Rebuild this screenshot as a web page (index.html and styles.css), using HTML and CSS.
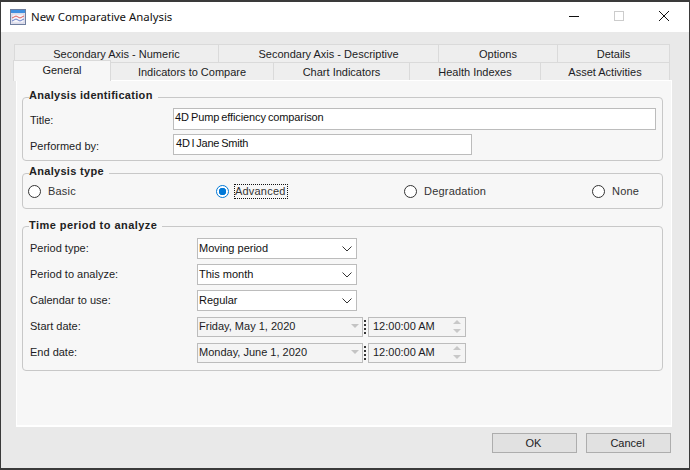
FILE: index.html
```html
<!DOCTYPE html>
<html lang="en">
<head>
<meta charset="utf-8">
<title>New Comparative Analysis</title>
<link rel="stylesheet" href="styles.css">
</head>
<body>
<div class="window">
  <header class="titlebar">
    <svg class="app-icon" width="16" height="16" viewBox="0 0 16 16">
      <rect x="0.5" y="0.5" width="15" height="15" fill="#e8e8f4" stroke="#6f7f9f"/>
      <rect x="1" y="1" width="14" height="3" fill="#3f8fe0"/>
      <rect x="2" y="5" width="12" height="9" fill="#f4f4fa" stroke="#b4b4cc" stroke-width="0.5"/>
      <path d="M2 9 L6 7 L10 9 L14 7" fill="none" stroke="#e06060"/>
      <path d="M2 12 L6 10 L10 12 L14 10" fill="none" stroke="#6a80c8"/>
    </svg>
    <span class="title">New Comparative Analysis</span>
    <div class="controls">
      <svg width="12" height="12" viewBox="0 0 12 12"><path d="M1 6.5H11" stroke="#111" fill="none"/></svg>
      <svg width="12" height="12" viewBox="0 0 12 12"><rect x="1.5" y="1.5" width="9" height="9" stroke="#ccc" fill="none"/></svg>
      <svg width="12" height="12" viewBox="0 0 12 12"><path d="M1 1L11 11M11 1L1 11" stroke="#111" fill="none"/></svg>
    </div>
  </header>
  <main class="body">
    <div class="tabs">
      <div class="tab-row back">
        <div class="tab w204">Secondary Axis - Numeric</div>
        <div class="tab w220">Secondary Axis - Descriptive</div>
        <div class="tab w119">Options</div>
        <div class="tab w112">Details</div>
      </div>
      <div class="tab-row front">
        <div class="tab active">General</div>
        <div class="tab w163">Indicators to Compare</div>
        <div class="tab w136">Chart Indicators</div>
        <div class="tab w131">Health Indexes</div>
        <div class="tab w129">Asset Activities</div>
      </div>
    </div>
    <section class="panel">
      <fieldset class="group id-group">
        <legend>Analysis identification</legend>
        <div class="form-row first">
          <label class="label-id">Title:</label>
          <div class="input wide">4D Pump efficiency comparison</div>
        </div>
        <div class="form-row">
          <label class="label-id">Performed by:</label>
          <div class="input medium">4D I Jane Smith</div>
        </div>
      </fieldset>
      <fieldset class="group type-group">
        <legend>Analysis type</legend>
        <div class="radios">
          <div class="radio"><span class="dot"></span><span>Basic</span></div>
          <div class="radio"><span class="dot on"></span><span class="focus">Advanced</span></div>
          <div class="radio"><span class="dot"></span><span>Degradation</span></div>
          <div class="radio"><span class="dot"></span><span>None</span></div>
        </div>
      </fieldset>
      <fieldset class="group time-group">
        <legend>Time period to analyze</legend>
        <div class="time-rows">
          <div class="form-row">
            <label class="label-time">Period type:</label>
            <div class="select"><span>Moving period</span><svg width="10" height="6" viewBox="0 0 10 6"><path d="M0.5 0.5L5 5L9.5 0.5" fill="none" stroke="#333"/></svg></div>
          </div>
          <div class="form-row">
            <label class="label-time">Period to analyze:</label>
            <div class="select"><span>This month</span><svg width="10" height="6" viewBox="0 0 10 6"><path d="M0.5 0.5L5 5L9.5 0.5" fill="none" stroke="#333"/></svg></div>
          </div>
          <div class="form-row">
            <label class="label-time">Calendar to use:</label>
            <div class="select"><span>Regular</span><svg width="10" height="6" viewBox="0 0 10 6"><path d="M0.5 0.5L5 5L9.5 0.5" fill="none" stroke="#333"/></svg></div>
          </div>
          <div class="form-row">
            <label class="label-time">Start date:</label>
            <div class="date"><span>Friday, May 1, 2020</span><i class="caret"></i></div>
            <i class="dots"></i>
            <div class="time"><span>12:00:00 AM</span><div class="spin"><i class="up"></i><i class="down"></i></div></div>
          </div>
          <div class="form-row">
            <label class="label-time">End date:</label>
            <div class="date"><span>Monday, June 1, 2020</span><i class="caret"></i></div>
            <i class="dots"></i>
            <div class="time"><span>12:00:00 AM</span><div class="spin"><i class="up"></i><i class="down"></i></div></div>
          </div>
        </div>
      </fieldset>
    </section>
    <footer class="actions">
      <button class="btn">OK</button>
      <button class="btn">Cancel</button>
    </footer>
  </main>
</div>
</body>
</html>
```
FILE: styles.css
```css
* { box-sizing: border-box; }
html, body { margin: 0; padding: 0; }
body {
  width: 690px;
  height: 470px;
  overflow: hidden;
  background: #fff;
  font-family: "Liberation Sans", Arial, sans-serif;
  font-size: 11px;
  color: #1c1c24;
}
.window {
  width: 690px;
  height: 470px;
  display: flex;
  flex-direction: column;
  border: 1px solid #3a3a3a;
  border-top-width: 2px;
  border-bottom-width: 2px;
}
.titlebar {
  height: 30px;
  flex: none;
  display: flex;
  align-items: center;
  background: #fff;
  padding: 0 0 0 9px;
}
.app-icon { flex: none; margin-top: -1px; }
.title {
  margin-left: 5px;
  font-family: "Noto Sans", sans-serif;
  font-size: 11.4px;
  color: #111;
  margin-top: -1px;
}
.controls {
  margin-left: auto;
  display: flex;
  gap: 33px;
  padding-right: 19px;
  margin-top: -2px;
}
.body {
  flex: 1;
  display: flex;
  flex-direction: column;
  background: #e9e9e9;
  padding-top: 12px;
}
.tabs { display: flex; flex-direction: column; }
.tab-row { display: flex; height: 18px; }
.back { margin-left: 13px; }
.front { margin-left: 12px; }
.tab {
  display: flex;
  align-items: center;
  justify-content: center;
  height: 18px;
  background: #eeeeee;
  border: 1px solid #dadada;
  border-left-width: 0;
  border-bottom-width: 0;
}
.back .tab:first-child { border-left-width: 1px; }
.w204 { width: 205px; }
.w220 { width: 220px; }
.w119 { width: 119px; }
.w112 { width: 112px; }
.w163 { width: 163px; }
.w136 { width: 136px; }
.w131 { width: 131px; }
.w129 { width: 129px; }
.tab.active {
  width: 98px;
  height: 21px;
  margin-top: -2px;
  padding-bottom: 2px;
  background: #f7f7f7;
  border: 1px solid #dadada;
  border-bottom-width: 0;
  position: relative;
  z-index: 1;
}
.panel {
  margin-left: 15px;
  width: 656px;
  height: 347px;
  flex: none;
  background: #f7f7f7;
  border: 1px solid #ffffff;
  border-width: 1px 1px 2px 1px;
  padding: 9px 8px 0 5px;
  display: flex;
  flex-direction: column;
}
.group {
  margin: 0;
  padding: 0;
  border: 1px solid #c8c8c8;
  border-radius: 4px;
  min-width: 0;
}
.group legend {
  font-weight: 700;
  font-size: 11px;
  line-height: 11px;
  padding: 0 5px 0 0;
  margin-left: 6px;
  height: 15px;
  color: #222;
  letter-spacing: 0.3px;
}
.id-group { height: 71px; padding-top: 3px; }
.type-group { margin-top: 5px; height: 43px; }
.time-group { margin-top: 10px; height: 152px; padding-top: 4px; }
.time-group legend { letter-spacing: 0.45px; line-height: 12px; }
.form-row { display: flex; align-items: center; margin-top: 4px; padding-left: 7px; }
.form-row.first { margin-top: 0; }
.label-id { width: 143px; flex: none; padding-top: 2px; }
.label-time { width: 167px; flex: none; padding-bottom: 2px; }
.input {
  height: 21px;
  background: #fff;
  border: 1px solid #bcbcbc;
  padding-left: 1px;
  line-height: 16px;
  color: #111;
}
.input.wide { width: 483px; height: 22px; word-spacing: -0.8px; letter-spacing: -0.12px; }
.input.medium { width: 299px; padding-left: 2px; word-spacing: -1px; letter-spacing: -0.2px; }
.radios { display: flex; height: 20px; padding-left: 5px; }
.radio { width: 188px; flex: none; display: flex; align-items: center; }
.radio:last-child { width: auto; }
.radio span:last-child { letter-spacing: 0.2px; color: #333; }
.dot {
  width: 13px;
  height: 13px;
  flex: none;
  margin-right: 7px;
  border-radius: 50%;
  border: 1px solid #333;
  background: #fff;
}
.dot.on {
  border-color: #0078d7;
  background: radial-gradient(circle, #0078d7 0 3.5px, #fff 4px);
  margin-right: 5px;
}
.radio .focus {
  border: 1px dotted #111;
  line-height: 13px;
  height: 15px;
  padding-right: 1px;
}
.time-rows { display: flex; flex-direction: column; gap: 5px; }
.time-rows .form-row { margin-top: 0; height: 21px; }
.select {
  width: 160px;
  height: 21px;
  display: flex;
  align-items: center;
  justify-content: space-between;
  background: #fff;
  border: 1px solid #bcbcbc;
  padding: 0 4px 2px 1px;
  color: #111;
}
.select svg { margin-top: 2px; }
.date {
  width: 166px;
  height: 20px;
  display: flex;
  align-items: center;
  justify-content: space-between;
  background: #f4f4f4;
  border: 1px solid #bcbcbc;
  padding: 0 3px 1px 1px;
}
.caret {
  width: 0;
  height: 0;
  border: 4px solid transparent;
  border-top: 4px solid #c4c4c4;
  border-bottom: 0;
}
.dots {
  width: 2px;
  height: 14px;
  margin: 0 2px 0 1px;
  background: repeating-linear-gradient(#333 0 2px, transparent 2px 4px);
  flex: none;
}
.time {
  width: 98px;
  height: 20px;
  display: flex;
  align-items: center;
  justify-content: space-between;
  background: #f4f4f4;
  border: 1px solid #bcbcbc;
  padding: 0 4px 1px;
}
.spin { display: flex; flex-direction: column; gap: 5px; }
.up, .down {
  display: block;
  width: 0;
  height: 0;
  border: 4px solid transparent;
}
.up { border-bottom: 4px solid #c8c8c8; border-top: 0; }
.down { border-top: 4px solid #c8c8c8; border-bottom: 0; }
.actions {
  display: flex;
  justify-content: flex-end;
  gap: 9px;
  padding: 6px 18px 0 0;
}
.btn {
  width: 85px;
  height: 20px;
  padding: 0 2px 0 0;
  background: #e1e1e1;
  border: 1px solid #adadad;
  font: inherit;
  color: #1c1c24;
}
```
